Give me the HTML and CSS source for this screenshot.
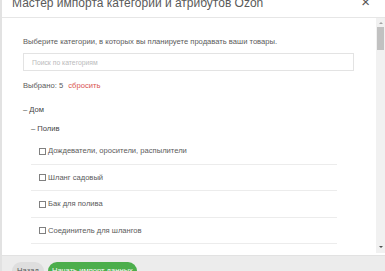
FILE: index.html
```html
<!DOCTYPE html>
<html lang="ru">
<head>
<meta charset="utf-8">
<link rel="stylesheet" href="styles.css">
</head>
<body>
<div class="modal">
  <header class="modal-header">
    <h1 class="modal-title">Мастер импорта категорий и атрибутов Ozon</h1>
    <span class="close">×</span>
  </header>
  <div class="modal-body">
    <div class="content">
      <p class="intro">Выберите категории, в которых вы планируете продавать ваши товары.</p>
      <div class="search">Поиск по категориям</div>
      <p class="selected">Выбрано: 5 <span class="reset">сбросить</span></p>
      <div class="tree-root">– Дом</div>
      <div class="tree-sub">– Полив</div>
      <ul class="items">
        <li class="item"><span class="box"></span>Дождеватели, оросители, распылители</li>
        <li class="item"><span class="box"></span>Шланг садовый</li>
        <li class="item"><span class="box"></span>Бак для полива</li>
        <li class="item"><span class="box"></span>Соединитель для шлангов</li>
      </ul>
    </div>
    <div class="scrollbar">
      <span class="arrow up"></span>
      <span class="thumb"></span>
      <span class="track"></span>
      <span class="arrow down"></span>
    </div>
  </div>
  <footer class="modal-footer">
    <span class="btn btn-back">Назад</span>
    <span class="btn btn-start">Начать импорт данных</span>
  </footer>
</div>
</body>
</html>
```
FILE: styles.css
```css
* { box-sizing: border-box; }
html, body { margin: 0; padding: 0; }
body {
  width: 385px;
  height: 271px;
  overflow: hidden;
  font-family: "Liberation Sans", Arial, sans-serif;
  color: #555;
  background: #fff;
}
.modal {
  display: flex;
  flex-direction: column;
  height: 271px;
  border-left: 2px solid #e2e2e2;
}
.modal-header {
  height: 18px;
  flex: none;
  display: flex;
  justify-content: space-between;
  align-items: flex-start;
  padding: 0 15px 0 10px;
  border-bottom: 1px solid #e6e6e6;
  overflow: hidden;
}
.modal-title {
  margin: -4px 0 0 0;
  font-size: 12px;
  line-height: 14px;
  font-weight: normal;
  color: #5a5a5a;
}
.close {
  margin-top: -6px;
  font-size: 15px;
  line-height: 15px;
  color: #555;
}
.modal-body {
  flex: none;
  height: 237px;
  display: flex;
}
.content {
  flex: 1;
  padding: 19px 0 0 21px;
  font-size: 7.6px;
  line-height: 10px;
  overflow: hidden;
}
.intro { margin: 0; color: #5a5a5a; }
.search {
  margin-top: 6px;
  width: 331px;
  height: 18px;
  border: 1px solid #e3e3e3;
  padding: 4px 0 0 8px;
  font-size: 6.8px;
  line-height: 9px;
  color: #bbb;
}
.selected { margin: 10px 0 0 0; color: #5a5a5a; }
.reset { color: #d9534f; margin-left: 3px; }
.tree-root { margin-top: 14px; color: #444; }
.tree-sub { margin-top: 9px; padding-left: 8px; color: #444; }
.items {
  list-style: none;
  margin: 4px 0 0 8px;
  padding: 0;
  width: 306px;
}
.item {
  display: flex;
  align-items: center;
  padding: 8px 0 7.5px 8px;
  border-bottom: 1px solid #ececec;
  color: #5a5a5a;
}
.box {
  width: 7px;
  height: 7px;
  border: 1px solid #808080;
  margin-right: 2px;
  background: #fff;
}
.scrollbar {
  flex: none;
  width: 9px;
  height: 235px;
  background: #f1f1f1;
  display: flex;
  flex-direction: column;
  align-items: center;
}
.arrow {
  width: 0;
  height: 0;
  border-left: 2.5px solid transparent;
  border-right: 2.5px solid transparent;
}
.arrow.up { margin-top: 4px; border-bottom: 2.5px solid #a3a3a3; }
.arrow.down { margin-bottom: 5px; border-top: 2.5px solid #505050; }
.thumb {
  margin-top: 3px;
  width: 7px;
  height: 23px;
  background: #c1c1c1;
}
.track { flex: 1; }
.modal-footer {
  flex: 1;
  background: #ececec;
  border-top: 1px solid #e2e2e2;
  padding: 6px 0 0 10px;
  display: flex;
  gap: 4px;
  align-items: flex-start;
}
.btn {
  height: 18px;
  border-radius: 9px;
  font-size: 7.6px;
  line-height: 18px;
  text-align: center;
}
.btn-back { background: #dedede; color: #555; width: 32px; }
.btn-start { background: #4cae4c; color: #fff; width: 89px; }
```
